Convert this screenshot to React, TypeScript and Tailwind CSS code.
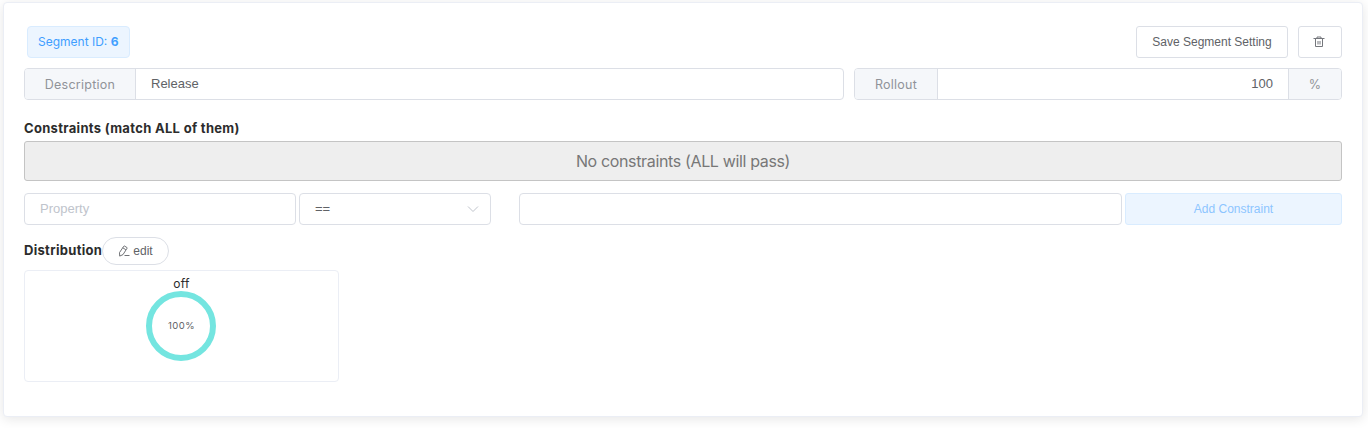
import React from "react";

const sans = "font-['Liberation_Sans',Arial,sans-serif]";

function TrashIcon() {
  return (
    <svg viewBox="0 0 12 12" className="size-3 fill-none stroke-[#75777c]">
      <path d="M.5 2.5h11M4 2.5v-1.5h4v1.5M2.5 2.5v8h7v-8M5 5v3.5M7 5v3.5" />
    </svg>
  );
}

function EditIcon() {
  return (
    <svg viewBox="0 0 12 12" className="size-3 fill-none stroke-[#606266]" strokeWidth="0.9">
      <path d="M6.6 1.1 8.9 2.5a.5.5 0 0 1 .2.7L5 9.6 1.7 11.1 1.5 7.6 5.7 1.3a.6.6 0 0 1 .9-.2ZM4.8 2.8 7.8 4.7M6.5 10.5H11.5" />
    </svg>
  );
}

export default function App() {
  return (
    <div className="h-[428px] overflow-hidden bg-white pl-[3px] pr-[5px] pt-[2px] font-['Inter',sans-serif] text-[13px] text-[#2c2c2c]">
      <section className="h-[415px] rounded border border-[#ebeef5] bg-white px-5 pt-[23px] shadow-[0_2px_12px_0_rgba(0,0,0,0.1)]">
        <header className="flex h-8 items-center justify-between">
          <div className="ml-[3px] flex h-8 w-[103px] items-center rounded border border-[#d9ecff] bg-[#ecf5ff] pl-2.5 text-xs text-[#409eff]">
            <span>Segment ID: <b>6</b></span>
          </div>
          <div className={`${sans} flex gap-2.5 text-xs text-[#606266]`}>
            <button className="h-8 w-[152px] rounded-[3px] border border-[#dcdfe6]">Save Segment Setting</button>
            <button className="flex h-8 w-11 items-center justify-center rounded-[3px] border border-[#dcdfe6] pr-0.5" aria-label="Delete segment"><TrashIcon /></button>
          </div>
        </header>

        <div className="mt-2.5 flex h-8 gap-2.5">
          <div className="flex w-[820px] overflow-hidden rounded border border-[#dcdfe6]">
            <div className="flex w-[111px] items-center justify-center border-r border-[#dcdfe6] bg-[#f5f7fa] pt-0.5 text-[12.5px] tracking-[0.25px] text-[#909399]">Description</div>
            <div className={`${sans} flex-1 pl-[15px] leading-[29px] text-[#606266]`}>Release</div>
          </div>
          <div className="flex w-[488px] overflow-hidden rounded border border-[#dcdfe6]">
            <div className="flex w-[83px] items-center justify-center border-r border-[#dcdfe6] bg-[#f5f7fa] pt-0.5 text-[12.5px] tracking-[0.25px] text-[#909399]">Rollout</div>
            <div className={`${sans} flex-1 pr-[15px] text-right leading-[29px] text-[#606266]`}>100</div>
            <div className="flex w-[53px] items-center justify-center border-l border-[#dcdfe6] bg-[#f5f7fa] pt-0.5 text-[12.5px] text-[#909399]">%</div>
          </div>
        </div>

        <h2 className="mt-5 h-[21px] font-bold leading-[17px] tracking-[0.31px]">Constraints (match ALL of them)</h2>
        <div className="flex h-10 items-center justify-center rounded-[3px] border border-[#c4c4c4] bg-[#eee] text-base tracking-[-0.35px] text-[#777]">No constraints (ALL will pass)</div>

        <div className={`${sans} mt-3 flex h-8`}>
          <div className="w-[272px] rounded border border-[#dcdfe6] pl-[15px] leading-[30px] text-[#c0c4cc]">Property</div>
          <div className="ml-[3px] flex w-48 items-center justify-between rounded border border-[#dcdfe6] pl-[15px] pr-[11px] text-[#606266]">
            <span>==</span>
            <svg viewBox="0 0 12 12" className="size-3 fill-none stroke-[#c0c4cc]"><path d="m1 3.5 5 5 5-5" /></svg>
          </div>
          <div className="ml-7 w-[603px] rounded border border-[#dcdfe6]" />
          <button className="ml-[3px] w-[217px] rounded-[3px] border border-[#d9ecff] bg-[#ecf5ff] text-xs text-[#8cc5ff]">Add Constraint</button>
        </div>

        <div className="mt-3 flex h-7 items-center">
          <h2 className="w-[78px] font-bold tracking-[0.31px]">Distribution</h2>
          <button className={`${sans} flex h-7 w-[67px] items-center justify-center gap-[3px] rounded-full border border-[#dcdfe6] text-xs text-[#606266]`}><EditIcon /><span>edit</span></button>
        </div>
        <div className="mt-[5px] flex h-28 w-[315px] flex-col items-center rounded border border-[#ebeef5] pr-px pt-1">
          <span className="h-4 pl-px text-xs leading-[18px] tracking-[0.25px]">off</span>
          <div className="flex size-[70px] items-center justify-center rounded-full border-[6px] border-[#74e5e0] pb-px pl-px text-[9.5px] leading-3 tracking-[0.45px] text-[#606266]">100%</div>
        </div>
      </section>
    </div>
  );
}
